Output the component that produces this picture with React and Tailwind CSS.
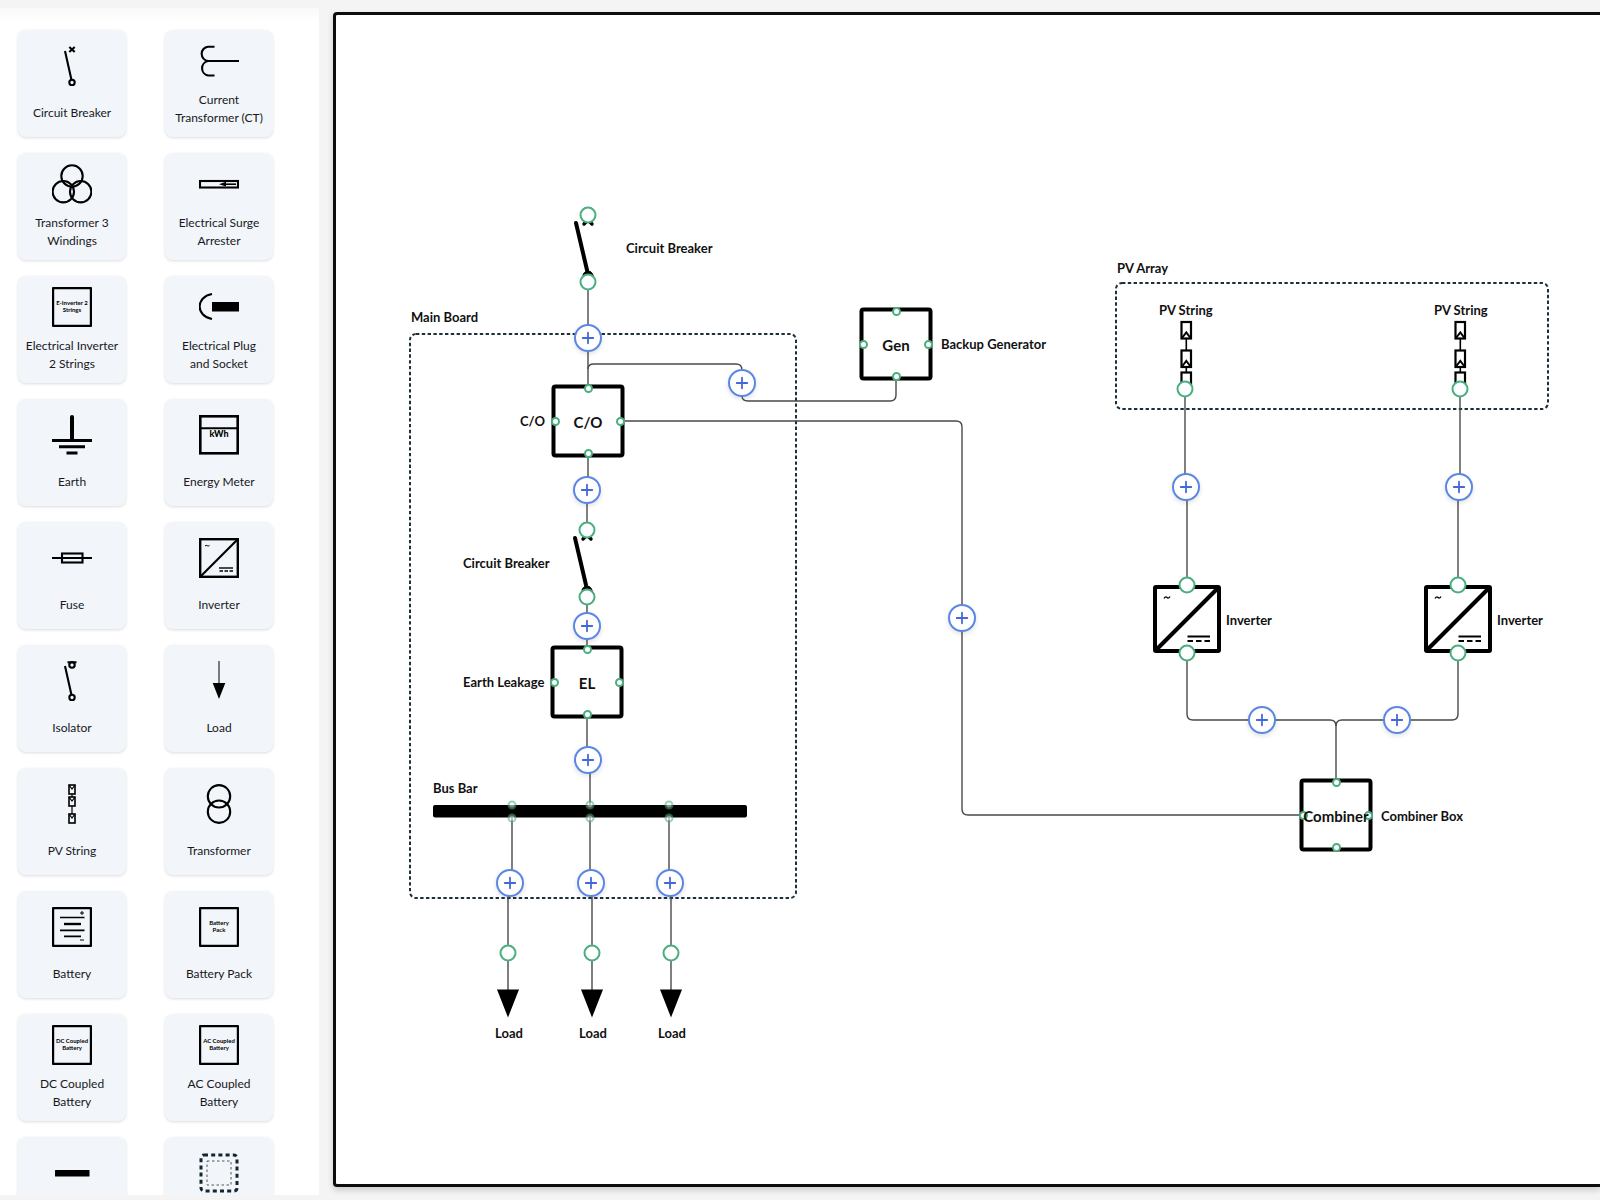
import React from 'react'
import { Plus } from 'lucide-react'

const TinyText = ({ lines }) => (
  <>
    <rect x="1" y="1" width="38" height="38" rx="1" fill="none" stroke="#000" strokeWidth="2.4" />
    {lines.map((line, i) => (
      <text key={line} x="20" y={18 + i * 7} textAnchor="middle" fontSize="6" fontWeight="700">{line}</text>
    ))}
  </>
)

const PvCell = ({ y }) => (
  <>
    <rect x="17" y={y + 1} width="6" height="9" strokeWidth="1.6" />
    <path d={`M17 ${y + 1} L20 ${y + 5} L23 ${y + 1}`} strokeWidth="1.2" />
  </>
)

const symbols = {
  breaker: (
    <>
      <path d="M17.3 1 L22.7 6 M22.7 1 L17.3 6 M13 5 L19.5 34" />
      <circle cx="20" cy="36.5" r="2.7" />
    </>
  ),
  ct: <path d="M15.5 5.7 H9 A7.2 7.2 0 0 0 9 20 A7.4 7.4 0 0 0 9 34.5 H15.5 M8 20 H40" />,
  windings: (
    <>
      <circle cx="20" cy="12" r="10.7" />
      <circle cx="11.3" cy="27.7" r="10.7" />
      <circle cx="28.7" cy="27.7" r="10.7" />
    </>
  ),
  surge: (
    <>
      <rect x="1" y="17" width="38" height="6.5" />
      <path d="M25 20.2 H37" strokeWidth="1.6" />
      <path d="M20 20.2 L27 17.8 V22.6 Z" fill="#000" stroke="none" />
    </>
  ),
  inverter2: <g fill="#000" stroke="none"><TinyText lines={['E-Inverter 2', 'Strings']} /></g>,
  plug: (
    <>
      <path d="M13 7 C-3.5 10 -3.5 29 13 32" />
      <rect x="13" y="15" width="27" height="9.5" fill="#000" stroke="none" />
    </>
  ),
  earth: (
    <>
      <path d="M20 2 V25" strokeWidth="4" strokeLinecap="round" />
      <path d="M0 25.5 H40 M7 31.7 H33 M14.5 38 H25.5" strokeWidth="3" />
    </>
  ),
  meter: (
    <>
      <rect x="1.3" y="1.3" width="37.4" height="37" strokeWidth="2.6" />
      <path d="M1 13.3 H39" />
      <text x="20" y="22" textAnchor="middle" fontSize="9" fontWeight="900" fill="#000" stroke="none">kWh</text>
    </>
  ),
  fuse: (
    <>
      <path d="M0 20 H40" />
      <rect x="10" y="15.5" width="20.5" height="9" />
    </>
  ),
  inverter: (
    <>
      <rect x="1.2" y="1.2" width="37.6" height="37.6" strokeWidth="2.4" />
      <path d="M2 38 L38 2" />
      <path d="M6 8 Q7.2 6.8 8.2 7.7 T10.5 7.4" strokeWidth="1" />
      <path d="M20 30 H34" strokeWidth="1.4" />
      <path d="M20.5 33 H24 M25.5 33 H29 M30.5 33 H34" strokeWidth="1.6" />
    </>
  ),
  isolator: (
    <>
      <path d="M15.5 1.3 H24.5 M13 5 L19.5 34" />
      <circle cx="20" cy="4" r="2.7" />
      <circle cx="20" cy="36.5" r="2.7" />
    </>
  ),
  load: (
    <>
      <path d="M20 0 V23" strokeWidth="1" />
      <path d="M13.7 22 H26.3 L20 38 Z" fill="#000" stroke="none" />
    </>
  ),
  pv: (
    <>
      <PvCell y={0} />
      <PvCell y={12} />
      <PvCell y={29} />
      <path d="M20 10 V13 M20 22 V30" strokeWidth="1.2" />
    </>
  ),
  transformer: (
    <>
      <circle cx="20" cy="12.3" r="11.2" />
      <circle cx="20" cy="27.7" r="11.2" />
    </>
  ),
  battery: (
    <>
      <rect x="1" y="1" width="38" height="38" rx="1" strokeWidth="2.4" />
      <path d="M8 10.5 H32.5 M8 23.3 H32.5 M12 29.3 H29" strokeWidth="1.7" />
      <path d="M12 17 H29" strokeWidth="2.4" />
      <path d="M28 6 H32 M30 4 V8 M28 33 H32" strokeWidth="1" />
    </>
  ),
  batteryPack: <g fill="#000" stroke="none"><TinyText lines={['Battery', 'Pack']} /></g>,
  dcBattery: <g fill="#000" stroke="none"><TinyText lines={['DC Coupled', 'Battery']} /></g>,
  acBattery: <g fill="#000" stroke="none"><TinyText lines={['AC Coupled', 'Battery']} /></g>,
  busBar: <rect x="3" y="17" width="34.5" height="6.6" rx="0.5" fill="#000" stroke="none" />,
  group: (
    <>
      <rect x="2" y="2" width="36" height="36" rx="3" stroke="#16262e" strokeWidth="3" strokeDasharray="4 3.2" />
      <rect x="8" y="8" width="24" height="24" stroke="#555" strokeWidth="1" strokeDasharray="2.5 2.5" />
    </>
  ),
}

const palette = [
  { symbol: 'breaker', lines: ['Circuit Breaker'] },
  { symbol: 'ct', lines: ['Current', 'Transformer (CT)'] },
  { symbol: 'windings', lines: ['Transformer 3', 'Windings'] },
  { symbol: 'surge', lines: ['Electrical Surge', 'Arrester'] },
  { symbol: 'inverter2', lines: ['Electrical Inverter', '2 Strings'] },
  { symbol: 'plug', lines: ['Electrical Plug', 'and Socket'] },
  { symbol: 'earth', lines: ['Earth'] },
  { symbol: 'meter', lines: ['Energy Meter'] },
  { symbol: 'fuse', lines: ['Fuse'] },
  { symbol: 'inverter', lines: ['Inverter'] },
  { symbol: 'isolator', lines: ['Isolator'] },
  { symbol: 'load', lines: ['Load'] },
  { symbol: 'pv', lines: ['PV String'] },
  { symbol: 'transformer', lines: ['Transformer'] },
  { symbol: 'battery', lines: ['Battery'] },
  { symbol: 'batteryPack', lines: ['Battery Pack'] },
  { symbol: 'dcBattery', lines: ['DC Coupled', 'Battery'] },
  { symbol: 'acBattery', lines: ['AC Coupled', 'Battery'] },
  { symbol: 'busBar', name: 'Bus Bar', lines: [] },
  { symbol: 'group', name: 'Group', lines: [] },
]

// all canvas coordinates are relative to the inside of the canvas border
const wires = [
  'M252 275 V370',
  'M252 354 Q252 349 258 349 H400 Q406 349 406 355 V381 Q406 386 412 386 H554 Q560 386 560 380 V365',
  'M289 406 H620 Q626 406 626 412 V794 Q626 800 632 800 H964',
  'M252 443 V475',
  'M251 475 V508 M251 590 V632 M251 704 V745',
  'M254 745 V790',
  'M176 802 V868 M254 802 V868 M333 802 V868',
  'M172 868 V976 M256 868 V976 M335 868 V976',
  'M849 382 V472 M851 472 V565',
  'M1124 382 V472 M1122 472 V565',
  'M851 646 V699 Q851 705 857 705 H994 Q1000 705 1000 711 V765',
  'M1122 646 V699 Q1122 705 1116 705 H1006 Q1000 705 1000 711',
]

const groups = [
  { x: 74, y: 319, width: 386, height: 564 },
  { x: 780, y: 268, width: 432, height: 126 },
]

const boxes = [
  { x: 252, y: 406, text: 'C/O' },
  { x: 251, y: 667, text: 'EL' },
  { x: 560, y: 329, text: 'Gen' },
  { x: 1000, y: 800, text: 'Combiner' },
]

const labels = [
  { x: 290, y: 233, text: 'Circuit Breaker' },
  { x: 75, y: 302, text: 'Main Board' },
  { x: 184, y: 406, text: 'C/O' },
  { x: 127, y: 548, text: 'Circuit Breaker' },
  { x: 127, y: 667, text: 'Earth Leakage' },
  { x: 97, y: 773, text: 'Bus Bar' },
  { x: 605, y: 329, text: 'Backup Generator' },
  { x: 781, y: 253, text: 'PV Array' },
  { x: 823, y: 295, text: 'PV String' },
  { x: 1098, y: 295, text: 'PV String' },
  { x: 890, y: 605, text: 'Inverter' },
  { x: 1161, y: 605, text: 'Inverter' },
  { x: 1045, y: 801, text: 'Combiner Box' },
  { x: 159, y: 1018, text: 'Load' },
  { x: 243, y: 1018, text: 'Load' },
  { x: 322, y: 1018, text: 'Load' },
]

const inserts = [
  [252, 323], [406, 368], [251, 475], [251, 611], [252, 745],
  [174, 868], [255, 868], [334, 868], [626, 603],
  [850, 472], [1123, 472], [926, 705], [1061, 705],
]

const ports = [
  [252, 200], [252, 267], [251, 515], [251, 582],
  [172, 938], [256, 938], [335, 938],
  [849, 374], [1124, 374],
  [851, 570], [851, 638], [1122, 570], [1122, 638],
]

const Switch = ({ x, y }) => (
  <g transform={`translate(${x} ${y})`} stroke="#000" strokeLinecap="round">
    <path d="M-12 8 L-1 55" strokeWidth="4" />
    <path d="M-4 9 L4 1 M4 9 L-4 1" strokeWidth="3.4" />
    <circle cx="0" cy="61" r="5" fill="#000" />
  </g>
)

const PvSymbol = ({ x, y }) => (
  <g transform={`translate(${x} ${y})`} fill="none" stroke="#000" strokeWidth="2.2">
    <rect x="-4.5" y="1" width="9.5" height="16.5" />
    <rect x="-4.5" y="29.5" width="9.5" height="16.5" />
    <rect x="-4.5" y="51.5" width="9.5" height="16.5" />
    <path d="M0.3 18 V29 M0.3 46 V51" strokeWidth="1.6" />
    <path d="M-4 17 L0.3 11.5 L4.5 17 M-4 45.5 L0.3 40 L4.5 45.5" strokeWidth="2" />
  </g>
)

const InverterSymbol = ({ x, y }) => (
  <g transform={`translate(${x} ${y})`} fill="none" stroke="#000">
    <rect x="-32" y="-32" width="64" height="64" rx="1" fill="#fff" strokeWidth="4" />
    <path d="M-31 31 L31 -31" strokeWidth="4" />
    <path d="M-23 -20.5 Q-21.5 -23 -20 -21.5 T-17 -22.5" strokeWidth="1.3" />
    <path d="M0.5 17.5 H23" strokeWidth="2" />
    <path d="M0.5 22 H6 M9 22 H14.5 M17.5 22 H23" strokeWidth="2.2" />
  </g>
)

function PaletteItem({ symbol, name, lines }) {
  return (
    <button
      type="button"
      draggable
      aria-label={name}
      className={`flex h-[107px] flex-col items-center justify-center rounded-lg bg-[#f2f5fa] text-center shadow-[0_1px_3px_rgba(0,0,0,0.14)] ${lines.length > 1 ? 'gap-2.5' : 'gap-[18px]'}`}
    >
      <svg viewBox="0 0 40 40" className="size-10" fill="none" stroke="#000" strokeWidth="2.1" aria-hidden="true">
        {symbols[symbol]}
      </svg>
      <span className="min-h-[18px] text-[12px] leading-[18px] whitespace-nowrap text-[#17191c]">
        {lines.map((line) => (
          <span key={line} className="block">{line}</span>
        ))}
      </span>
    </button>
  )
}

function SmallPort({ className }) {
  return <span className={`absolute size-[9px] -translate-x-1/2 -translate-y-1/2 rounded-full border-2 border-[#4bae7f] bg-white ${className}`} />
}

function BoxNode({ x, y, text }) {
  return (
    <div
      className="absolute flex size-[73px] -translate-x-1/2 -translate-y-1/2 items-center justify-center rounded-[4px] border-4 border-black bg-white"
      style={{ left: x, top: y }}
    >
      <SmallPort className="top-0 left-1/2" />
      <SmallPort className="top-full left-1/2" />
      <SmallPort className="top-1/2 left-0" />
      <SmallPort className="top-1/2 left-full" />
      <span className="relative text-[15px] leading-5 font-bold">{text}</span>
    </div>
  )
}

function Canvas() {
  return (
    <main className="relative mt-3 mb-[13px] ml-3.5 min-w-0 flex-1 overflow-hidden rounded-l-[4px] border-[3px] border-r-0 border-[#0d0d0d] bg-white shadow-[0_3px_6px_rgba(0,0,0,0.18)]">
      <svg className="absolute inset-0 size-full" aria-hidden="true">
        <g fill="none" stroke="#1d3039" strokeWidth="2" strokeDasharray="3.4 2.4">
          {groups.map((g) => (
            <rect key={g.x} {...g} rx="6" />
          ))}
        </g>
        <g fill="none" stroke="#4a4a4a" strokeWidth="1.4">
          {wires.map((d) => (
            <path key={d} d={d} />
          ))}
        </g>
        <Switch x={252} y={200} />
        <Switch x={251} y={515} />
        <PvSymbol x={850} y={306} />
        <PvSymbol x={1124} y={306} />
        <InverterSymbol x={851} y={604} />
        <InverterSymbol x={1122} y={604} />
        <rect x="97" y="790" width="314" height="12.5" rx="2" />
        {[172, 256, 335].map((x) => (
          <path key={x} d={`M${x - 11} 974.5 H${x + 11} L${x} 1002.5 Z`} />
        ))}
      </svg>

      {boxes.map((box) => (
        <BoxNode key={box.text} {...box} />
      ))}

      {[176, 254, 333].map((x) => (
        <div key={x} className="absolute top-[790px] h-[13px] opacity-55" style={{ left: x }}>
          <SmallPort className="top-0 left-0" />
          <SmallPort className="top-full left-0" />
        </div>
      ))}

      {ports.map(([x, y]) => (
        <span
          key={`${x}-${y}`}
          className="absolute size-[17px] -translate-x-1/2 -translate-y-1/2 rounded-full border-2 border-[#4bae7f] bg-white"
          style={{ left: x, top: y }}
        />
      ))}

      {inserts.map(([x, y]) => (
        <button
          key={`${x}-${y}`}
          type="button"
          aria-label="Insert component"
          className="absolute flex size-7 -translate-x-1/2 -translate-y-1/2 items-center justify-center rounded-full border-2 border-[#5c86e6] bg-white text-[#4468dc] shadow-[0_2px_5px_rgba(0,0,0,0.12)]"
          style={{ left: x, top: y }}
        >
          <Plus className="size-[18px] shrink-0" strokeWidth={2.4} />
        </button>
      ))}

      {labels.map(({ x, y, text }) => (
        <span
          key={`${x}-${y}`}
          className="absolute -translate-y-1/2 text-[13px] leading-[18px] font-bold whitespace-nowrap"
          style={{ left: x, top: y }}
        >
          {text}
        </span>
      ))}
    </main>
  )
}

export default function App() {
  return (
    <div className="flex h-screen overflow-hidden bg-[#f4f4f4] font-['Lato',sans-serif] text-[#111]">
      <aside className="mt-2 mb-[5px] w-[319px] shrink-0 overflow-y-auto bg-white bg-linear-to-b from-[#f9f9f9] to-white to-[14px] [scrollbar-width:none]">
        <div className="grid grid-cols-[108px_108px] gap-x-[39px] gap-y-4 pt-[22px] pb-6 pl-[18px]">
          {palette.map((item) => (
            <PaletteItem key={item.symbol} {...item} />
          ))}
        </div>
      </aside>
      <Canvas />
    </div>
  )
}
